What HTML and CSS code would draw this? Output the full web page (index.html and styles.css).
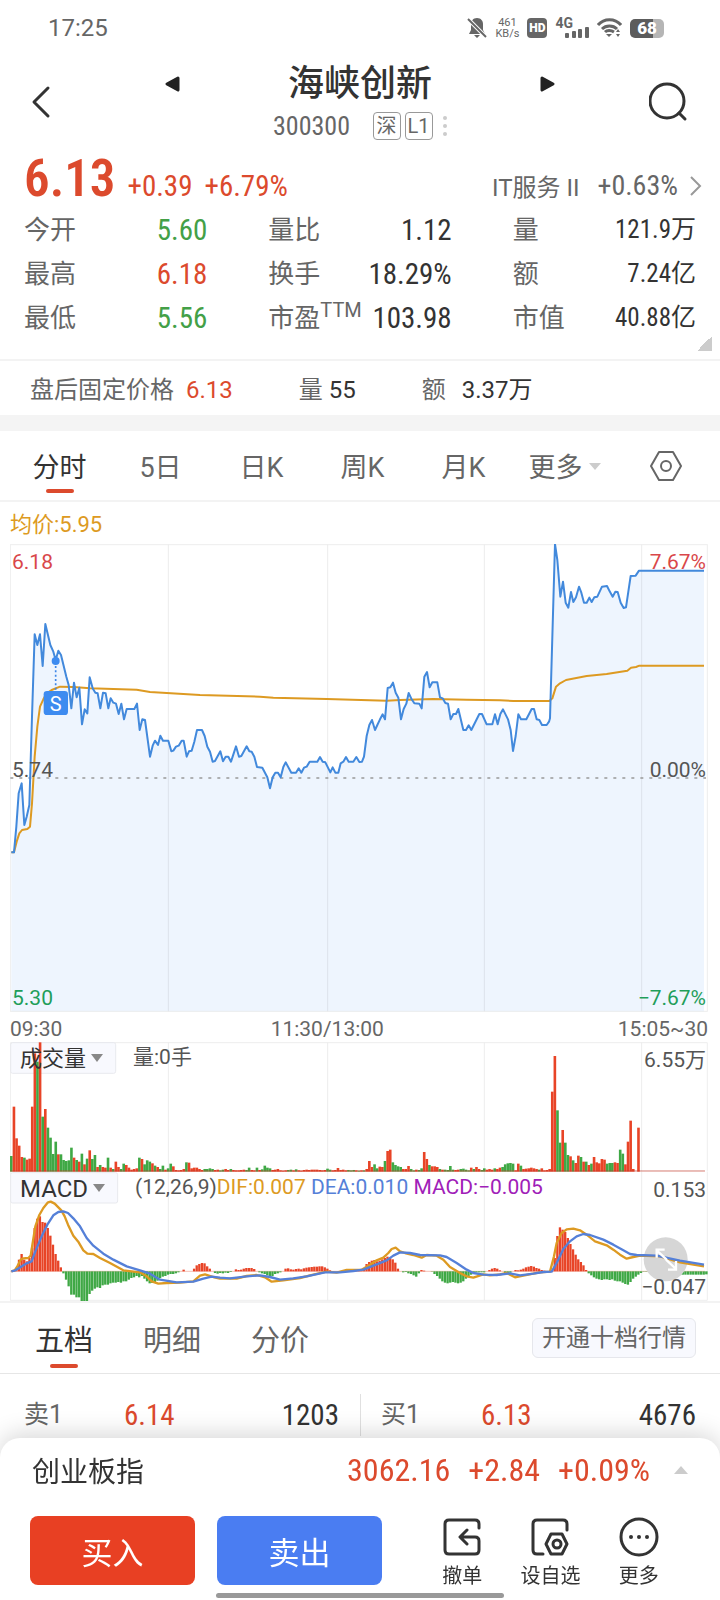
FILE: index.html
```html
<!DOCTYPE html>
<html lang="zh-CN">
<head>
  <meta charset="UTF-8">
  <meta name="viewport" content="width=device-width, initial-scale=1.0">
  <title>海峡创新 300300</title>
  <link rel="stylesheet" href="styles.css">
</head>
<body>
  <div class="status-bar">
    <span class="clock">17:25</span>
    <div class="status-icons">
      <svg width="20" height="22" viewBox="0 0 20 22">
        <path d="M10 1c-4 0-6 3-6 6v6l-2 4h16l-2-4V7c0-3-2-6-6-6z M7 18h6l-3 3z" fill="#666"/>
        <path d="M1 2l18 18" stroke="#fff" stroke-width="4"/>
        <path d="M1 2l18 18" stroke="#666" stroke-width="2"/>
      </svg>
      <span class="net-speed">461<br>KB/s</span>
      <span class="hd">HD</span>
      <span class="signal">
        <span class="signal-type">4G</span>
        <svg width="24" height="12" viewBox="0 0 24 12" fill="#666">
          <rect x="0" y="7" width="4" height="5" rx="1"/>
          <rect x="7" y="5" width="4" height="7" rx="1"/>
          <rect x="13" y="3" width="4" height="9" rx="1"/>
          <rect x="20" y="1" width="4" height="11" rx="1"/>
        </svg>
      </span>
      <svg width="25" height="20" viewBox="0 0 25 20" fill="none" stroke="#666" stroke-width="3">
        <path d="M1 7c6-7 17-7 23 0M5 11c4-4 11-4 15 0M8 14c2-2 6-2 9 0"/>
        <path d="M9 16l3 3 3-3z" fill="#666" stroke="none"/>
        <path d="M19 14l2-3 2 3zM19 16l2 3 2-3z" fill="#666" stroke="none"/>
      </svg>
      <span class="battery">68</span>
    </div>
  </div>

  <header class="header">
    <button class="icon-btn back" aria-label="返回">
      <svg width="20" height="34" viewBox="0 0 20 34" fill="none" stroke="#333" stroke-width="3" stroke-linecap="round" stroke-linejoin="round">
        <path d="M17 3L3 17l14 14"/>
      </svg>
    </button>
    <button class="icon-btn step" aria-label="上一只">
      <svg width="16" height="18" viewBox="0 0 16 18" fill="#222" stroke="#222" stroke-width="3" stroke-linejoin="round">
        <path d="M14 3L3 9l11 6z"/>
      </svg>
    </button>
    <div class="stock">
      <h1>海峡创新</h1>
      <div class="stock-code">
        <span class="num">300300</span>
        <span class="badges"><span class="badge">深</span><span class="badge">L1</span></span>
        <svg width="4" height="20" viewBox="0 0 4 20" fill="#ccc">
          <circle cx="2" cy="2" r="2"/><circle cx="2" cy="10" r="2"/><circle cx="2" cy="18" r="2"/>
        </svg>
      </div>
    </div>
    <button class="icon-btn step" aria-label="下一只">
      <svg width="16" height="18" viewBox="0 0 16 18" fill="#222" stroke="#222" stroke-width="3" stroke-linejoin="round">
        <path d="M2 3l11 6-11 6z"/>
      </svg>
    </button>
    <button class="icon-btn" aria-label="搜索">
      <svg width="40" height="40" viewBox="0 0 40 40" fill="none" stroke="#333" stroke-width="3" stroke-linecap="round">
        <circle cx="18" cy="19" r="17"/>
        <path d="M30 31l6 6"/>
      </svg>
    </button>
  </header>

  <section class="quote">
    <div class="quote-top">
      <span class="price num up">6.13</span>
      <span class="change num up">+0.39</span>
      <span class="change num up">+6.79%</span>
      <a class="sector" href="#">
        <span>IT服务 II</span>
        <span class="change num">+0.63%</span>
        <svg width="12" height="20" viewBox="0 0 12 20" fill="none" stroke="#999" stroke-width="2"><path d="M1 1l9 9-9 9"/></svg>
      </a>
    </div>
    <dl class="stats">
      <div><dt>今开</dt><dd class="num down">5.60</dd></div>
      <div><dt>量比</dt><dd class="num">1.12</dd></div>
      <div><dt>量</dt><dd class="num small">121.9万</dd></div>
      <div><dt>最高</dt><dd class="num up">6.18</dd></div>
      <div><dt>换手</dt><dd class="num">18.29%</dd></div>
      <div><dt>额</dt><dd class="num small">7.24亿</dd></div>
      <div><dt>最低</dt><dd class="num down">5.56</dd></div>
      <div><dt>市盈<sup>TTM</sup></dt><dd class="num">103.98</dd></div>
      <div><dt>市值</dt><dd class="num small">40.88亿</dd></div>
    </dl>
    <span class="corner"></span>
  </section>

  <div class="after-hours">
    <span>盘后固定价格 <b class="up">6.13</b></span>
    <span>量 <b>55</b></span>
    <span>额 <b class="wide">3.37万</b></span>
  </div>

  <nav class="chart-tabs">
    <button class="active">分时</button>
    <button>5日</button>
    <button>日K</button>
    <button>周K</button>
    <button>月K</button>
    <button>更多<i class="caret"></i></button>
    <button aria-label="设置">
      <svg width="32" height="32" viewBox="0 0 32 32" fill="none" stroke="#666" stroke-width="2" stroke-linejoin="round">
        <path d="M9 2h14l8 14-8 14H9L1 16z"/>
        <circle cx="16" cy="16" r="5"/>
      </svg>
    </button>
  </nav>

  <main class="charts">
    <p class="average">均价:5.95</p>

    <div class="panel">
      <svg class="plot" viewBox="30 42 2094 1404">
        <polygon id="price-area" fill="#eef5fe"/>
        <path class="grid" d="M505 42v1404M983 42v1404M1453 42v1404M1925 42v1404"/>
        <rect class="frame" x="31" y="44" width="2091" height="1400"/>
        <path d="M31 744H2118" stroke="#999" stroke-width="5" stroke-dasharray="9 18"/>
        <polyline id="average-line" class="line orange"/>
        <polyline id="price-line" class="line blue"/>
        <path d="M167 395v90" stroke="#3d86e8" stroke-width="5" stroke-dasharray="6 7"/>
        <circle cx="167" cy="393" r="12" fill="#3d8bf0"/>
        <rect x="131" y="483" width="73" height="72" rx="10" fill="#3d8bf0"/>
        <text class="trade-mark" x="167" y="543">S</text>
      </svg>
      <span class="label top-left red">6.18</span>
      <span class="label top-right red">7.67%</span>
      <span class="label mid-left">5.74</span>
      <span class="label mid-right">0.00%</span>
      <span class="label bottom-left green">5.30</span>
      <span class="label bottom-right green">−7.67%</span>
    </div>

    <div class="time-axis">
      <span>09:30</span>
      <span>11:30/13:00</span>
      <span>15:05~30</span>
    </div>

    <div class="panel">
      <svg class="plot" viewBox="30 187 2094 389">
        <path class="grid" d="M505 187v389M983 187v389M1453 187v389M1925 187v389"/>
        <path class="frame" d="M31 576V189H2122V576"/>
        <rect x="32" y="189" width="315" height="92" rx="6" fill="#f8f9fe" stroke="#e8e9ee" stroke-width="3"/>
        <g id="volume-bars"></g>
        <path d="M31 574H2115" stroke="#c0392b" stroke-width="2"/>
      </svg>
      <div class="panel-head">
        <span class="picker"><select aria-label="副图指标一"><option>成交量</option></select></span>
        <span>量:0手</span>
      </div>
      <span class="label panel-right">6.55万</span>
    </div>

    <div class="panel">
      <svg class="plot" viewBox="30 577 2094 387">
        <path class="grid" d="M505 577v387M983 577v387M1453 577v387M1925 577v387"/>
        <path class="frame" d="M31 577V962H2122V577"/>
        <rect x="32" y="579" width="321" height="91" rx="6" fill="#f8f9fe" stroke="#e8e9ee" stroke-width="3"/>
        <path d="M31 875H2115" stroke="#f0a090" stroke-width="2"/>
        <g id="macd-bars"></g>
        <circle cx="1997" cy="839" r="66" fill="#d6d6d6"/>
        <polyline id="dif-line" class="line orange"/>
        <polyline id="dea-line" class="line dea"/>
        <path d="M2000 840L1970 812M1970 834V810H1994M1998 840L2028 868M2028 844V870H2004" fill="none" stroke="#fff" stroke-width="7"/>
      </svg>
      <div class="panel-head">
        <span class="picker macd"><select aria-label="副图指标二"><option>MACD</option></select></span>
        <span>(12,26,9)<span class="dif">DIF:0.007</span> <span class="dea-text">DEA:0.010</span> <span class="macd-text">MACD:−0.005</span></span>
      </div>
      <span class="label panel-right">0.153</span>
      <span class="label bottom-right">−0.047</span>
    </div>
  </main>

  <nav class="depth-tabs">
    <button class="active">五档</button>
    <button>明细</button>
    <button>分价</button>
    <button class="upgrade">开通十档行情</button>
  </nav>

  <div class="depth">
    <div class="depth-row"><span>卖1</span><span class="num up">6.14</span><span class="num amount">1203</span></div>
    <div class="depth-row"><span>买1</span><span class="num up">6.13</span><span class="num amount">4676</span></div>
  </div>

  <footer class="sheet">
    <div class="index-row">
      <span class="index-name">创业板指</span>
      <span class="num up">3062.16</span>
      <span class="num up">+2.84</span>
      <span class="num up">+0.09%</span>
      <i class="caret up-caret"></i>
    </div>
    <div class="actions">
      <button class="buy">买入</button>
      <button class="sell">卖出</button>
      <div class="shortcuts">
        <button>
          <svg width="40" height="40" viewBox="0 0 40 40" fill="none" stroke="#333" stroke-width="3" stroke-linecap="round" stroke-linejoin="round">
            <path d="M37 11V7q0-4-4-4H7Q3 3 3 7v26q0 4 4 4h26q4 0 4-4V24q0-4-4-4H19M25 13l-7 7 7 7"/>
          </svg>
          撤单
        </button>
        <button>
          <svg width="40" height="40" viewBox="0 0 40 40" fill="none" stroke="#333" stroke-width="3" stroke-linecap="round" stroke-linejoin="round">
            <path d="M37 13V7q0-4-4-4H7Q3 3 3 7v26q0 4 4 4h6"/>
            <path d="M21 17h11l5 10-5 10H21l-5-10z"/>
            <circle cx="27" cy="27" r="4"/>
          </svg>
          设自选
        </button>
        <button>
          <svg width="40" height="40" viewBox="0 0 40 40" fill="none" stroke="#333" stroke-width="3">
            <circle cx="20" cy="20" r="18"/>
            <g fill="#333" stroke="none"><circle cx="12" cy="20" r="2"/><circle cx="20" cy="20" r="2"/><circle cx="28" cy="20" r="2"/></g>
          </svg>
          更多
        </button>
      </div>
    </div>
    <div class="home-bar"></div>
  </footer>

  <script src="charts.js"></script>
</body>
</html>
```
FILE: styles.css
```css
* {
  box-sizing: border-box;
}
body {
  margin: 0;
  min-height: 100vh;
  background: #fff;
  color: #333;
  font-family: Roboto, "Noto Sans CJK SC", sans-serif;
  font-size: 24px;
}
button {
  padding: 0;
  border: none;
  background: none;
  color: inherit;
  font: inherit;
  cursor: pointer;
}
svg {
  display: block;
}
.num {
  font-family: "Roboto Condensed", "Liberation Sans Narrow", Roboto, "Noto Sans CJK SC", sans-serif;
}
.up {
  color: #dc4a2d;
}
.down {
  color: #43a047;
}

/* status bar */
.status-bar {
  display: flex;
  justify-content: space-between;
  align-items: center;
  height: 56px;
  padding: 0 56px 0 48px;
  color: #666;
}
.status-icons {
  display: flex;
  align-items: center;
  gap: 8px;
}
.net-speed {
  font-size: 11px;
  line-height: 11px;
  text-align: center;
}
.hd {
  width: 20px;
  border-radius: 4px;
  background: #666;
  color: #fff;
  font-size: 12px;
  font-weight: 900;
  line-height: 20px;
  text-align: center;
}
.signal {
  display: flex;
  align-items: flex-end;
  height: 20px;
}
.signal-type {
  align-self: flex-start;
  margin-right: -8px;
  font-size: 14px;
  font-weight: 700;
  line-height: 10px;
}
.battery {
  width: 34px;
  border-radius: 5px;
  background: linear-gradient(to right, #5c5c5c 68%, #b5b5b5 68%);
  color: #fff;
  font-size: 17px;
  font-weight: 900;
  line-height: 19px;
  text-align: center;
}

/* header */
.header {
  display: flex;
  justify-content: space-between;
  align-items: center;
  height: 92px;
  padding: 0 31px;
}
.icon-btn svg {
  margin: 0 auto;
}
.back {
  width: 40px;
}
.back svg {
  margin: 0;
}
.step {
  padding-bottom: 36px;
}
.stock {
  width: 174px;
  padding-bottom: 4px;
}
.stock h1 {
  margin: 0;
  font-size: 36px;
  font-weight: 500;
  line-height: 52px;
  text-align: center;
}
.stock-code {
  display: flex;
  justify-content: space-between;
  align-items: center;
  height: 32px;
  color: #666;
  font-size: 26px;
  white-space: nowrap;
}
.badges {
  display: flex;
  gap: 4px;
  margin-left: 12px;
}
.badge {
  width: 28px;
  border: 1px solid #999;
  border-radius: 4px;
  font-size: 20px;
  line-height: 26px;
  text-align: center;
}

/* quote */
.quote {
  position: relative;
  height: 211px;
  padding: 3px 24px 0;
}
.quote-top {
  display: flex;
  align-items: baseline;
  height: 57px;
}
.price {
  margin-right: 12px;
  font-size: 51px;
  font-weight: 600;
  line-height: 56px;
}
.change {
  margin-right: 12px;
  font-size: 29px;
}
.sector {
  display: flex;
  align-items: center;
  margin-left: auto;
  margin-right: -6px;
  color: #666;
  text-decoration: none;
}
.sector .change {
  margin-left: 18px;
  font-size: 28px;
}
.stats {
  display: grid;
  grid-template-columns: repeat(3, 1fr);
  column-gap: 61px;
  margin: 0;
}
.stats div {
  display: flex;
  justify-content: space-between;
  height: 44px;
  line-height: 44px;
}
.stats dt {
  color: #666;
  font-size: 26px;
  white-space: nowrap;
}
.stats sup {
  font-size: 20px;
  line-height: 0;
}
.stats dd {
  margin: 0;
  font-size: 29px;
}
.stats .small {
  font-size: 25px;
}
.corner {
  position: absolute;
  right: 8px;
  bottom: 8px;
  width: 15px;
  height: 15px;
  background: linear-gradient(135deg, transparent 50%, #ccc 50%);
}
.after-hours {
  display: flex;
  gap: 66px;
  padding: 0 30px;
  border-top: 2px solid #f3f3f3;
  border-bottom: 16px solid #f4f4f4;
  height: 72px;
  color: #666;
  line-height: 58px;
}
.after-hours b {
  color: #333;
  font-weight: 400;
}
.after-hours .up {
  margin-left: 6px;
  color: #dc4a2d;
}
.after-hours .wide {
  margin-left: 10px;
}

/* chart period tabs */
.chart-tabs {
  display: grid;
  grid-template-columns: repeat(7, 1fr);
  height: 71px;
  padding: 0 4px 0 9px;
  border-bottom: 2px solid #f3f3f3;
  color: #666;
  font-size: 27px;
}
.chart-tabs svg {
  margin: 0 auto;
}
.active {
  position: relative;
  color: #333;
}
.active::after {
  content: "";
  position: absolute;
  left: 50%;
  bottom: 7px;
  width: 28px;
  height: 4px;
  margin-left: -14px;
  border-radius: 2px;
  background: #dc4a2d;
}
.caret {
  display: inline-block;
  margin: 0 0 6px 6px;
  border: 6px solid transparent;
  border-top: 7px solid #ccc;
  border-bottom: none;
  vertical-align: middle;
}
.up-caret {
  margin: 0 0 0 6px;
  border-width: 0 7px 8px;
  border-bottom: 8px solid #ccc;
}

/* charts */
.charts {
  padding: 0 12px 0 10px;
  font-size: 21px;
  color: #555;
}
.average {
  margin: 0;
  height: 42px;
  color: #dd9a22;
  font-size: 22px;
  line-height: 46px;
}
.panel {
  position: relative;
}
.plot {
  width: 100%;
  height: auto;
}
.grid {
  fill: none;
  stroke: #000;
  stroke-opacity: 0.08;
  stroke-width: 3;
}
.frame {
  fill: none;
  stroke: #eee;
  stroke-width: 3;
}
.line {
  fill: none;
  stroke-width: 6;
  stroke-linejoin: round;
}
.orange {
  stroke: #dd9a22;
}
.blue {
  stroke: #4289dc;
}
.dea {
  stroke: #5580d8;
}
#dif-line, #dea-line {
  stroke-width: 7;
}
.trade-mark {
  fill: #fff;
  font-size: 60px;
  text-anchor: middle;
}
.label {
  position: absolute;
  line-height: 24px;
}
.top-left, .mid-left, .bottom-left {
  left: 2px;
}
.top-right, .mid-right, .bottom-right, .panel-right {
  right: 2px;
}
.top-left, .top-right, .panel-right {
  top: 6px;
}
.mid-left, .mid-right {
  bottom: 230px;
}
.bottom-left, .bottom-right {
  bottom: 2px;
}
.red {
  color: #d9474a;
}
.green {
  color: #1f9e5a;
}
.time-axis {
  display: grid;
  grid-template-columns: 5fr 10fr 7fr;
  height: 30px;
  color: #666;
  line-height: 34px;
  text-align: center;
}
.time-axis span:first-child {
  text-align: left;
}
.time-axis span:last-child {
  text-align: right;
}
.panel-head {
  position: absolute;
  left: 0;
  top: 0;
  display: flex;
  gap: 17px;
  line-height: 30px;
}
.picker {
  position: relative;
  width: 106px;
}
.picker.macd {
  width: 108px;
}
.picker select {
  appearance: none;
  width: 100%;
  height: 34px;
  padding: 0 0 0 10px;
  border: none;
  background: none;
  color: #333;
  font: inherit;
  font-size: 22px;
}
.picker.macd select {
  font-size: 24px;
}
.picker::after {
  content: "";
  position: absolute;
  right: 13px;
  top: 12px;
  border: 6px solid transparent;
  border-top: 8px solid #888;
  border-bottom: none;
}
.dif {
  color: #dd9a22;
}
.dea-text {
  color: #5580d8;
}
.macd-text {
  color: #a020b8;
}

/* order book */
.depth-tabs {
  display: flex;
  align-items: stretch;
  gap: 50px;
  height: 73px;
  padding: 0 24px 0 35px;
  border-top: 2px solid #f3f3f3;
  border-bottom: 1px solid #e6e6e6;
  color: #666;
  font-size: 29px;
}
.depth-tabs .active::after {
  bottom: 5px;
}
.depth-tabs .upgrade {
  align-self: center;
  margin-left: auto;
  width: 164px;
  height: 40px;
  border: 1px solid #e6e7ec;
  border-radius: 6px;
  background: #f8f9fe;
  font-size: 24px;
  line-height: 38px;
}
.depth {
  display: grid;
  grid-template-columns: 1fr 1fr;
  padding: 20px 0 160px;
}
.depth-row {
  display: flex;
  padding: 0 21px 0 24px;
  color: #666;
  font-size: 25px;
  line-height: 42px;
}
.depth-row + .depth-row {
  padding: 0 24px 0 20px;
  border-left: 1px solid #e0e0e0;
}
.depth-row span:first-child {
  width: 100px;
}
.depth-row .num {
  font-size: 29px;
}
.depth-row .amount {
  margin-left: auto;
  color: #333;
}

/* bottom sheet */
.sheet {
  position: fixed;
  left: 0;
  right: 0;
  bottom: 0;
  padding-bottom: 2px;
  border-radius: 20px 20px 0 0;
  background: #fff;
  box-shadow: 0 -4px 24px rgba(0, 0, 0, 0.16);
}
.index-row {
  display: flex;
  align-items: center;
  gap: 18px;
  height: 64px;
  padding: 0 32px;
}
.index-row .num {
  font-size: 32px;
}
.index-name {
  margin-right: auto;
  font-size: 28px;
}
.actions {
  display: grid;
  grid-template-columns: 165fr 165fr 279fr;
  gap: 22px;
  padding: 14px 37px 0 30px;
}
.buy, .sell {
  height: 69px;
  border-radius: 8px;
  background: #e84023;
  color: #fff;
  font-size: 31px;
}
.sell {
  background: #4a7df2;
}
.shortcuts {
  display: grid;
  grid-template-columns: repeat(3, 1fr);
  padding-left: 14px;
  font-size: 20px;
  line-height: 34px;
}
.shortcuts svg {
  margin: 1px auto 2px;
}
.home-bar {
  width: 40%;
  height: 5px;
  margin: 0 auto;
  border-radius: 3px;
  background: #999;
}
```
FILE: charts.js
```js
const STEP = 7.84;
const LEFT = 30;
const RED = "#e84427";
const GREEN = "#3fa845";

const price = `34,967 42,967 49,890 56,790 65,760 73,885 80,860 88,825 96,560 104,313 112,345 120,313 128,408 136,282
151,345 160,365 167,390 175,362 183,375 199,440 206,465 214,535 222,458 230,502 238,473 246,583 254,538 262,550 269,442
278,475 286,488 293,490 301,535 309,488 317,490 325,535 332,505 340,518 348,521 356,552 364,521 372,568 380,537 403,537
411,521 419,600 427,568 435,570 450,680 458,647 465,632 474,645 481,617 489,632 505,632 514,664 520,662 528,650 536,647
545,632 551,632 560,680 567,664 575,662 583,635 591,600 606,600 614,618 622,650 630,665 638,695 645,693 661,664 669,694
677,680 685,680 693,695 708,649 717,680 724,678 740,649 748,664 755,665 763,680 771,711 787,713 802,742 810,775 818,742
826,728 834,728 842,742 850,711 857,697 874,728 888,728 896,715 904,728 912,713 920,710 929,695 952,695 960,681 968,695
976,697 991,727 998,712 1006,728 1015,728 1022,700 1030,695 1038,681 1046,695 1060,695 1069,681 1078,696 1086,695
1092,680 1100,618 1108,585 1116,570 1125,600 1132,585 1140,568 1148,553 1155,568 1163,474 1171,472 1179,458 1187,488
1195,503 1203,568 1211,537 1219,521 1226,489 1234,506 1243,520 1258,521 1265,535 1273,440 1281,426 1289,472 1297,457
1312,457 1320,502 1328,505 1336,519 1344,521 1352,568 1360,552 1368,552 1375,537 1390,600 1398,600 1406,586 1414,600
1438,552 1446,552 1460,583 1477,583 1485,553 1493,583 1501,552 1509,538 1524,568 1532,600 1539,663 1547,618 1555,553
1563,568 1579,568 1595,537 1602,537 1610,568 1618,570 1626,585 1640,585 1647,575 1650,565 1665,42 1672,90 1681,200
1689,155 1697,218 1705,233 1713,186 1720,216 1728,202 1737,170 1744,188 1752,218 1760,218 1768,203 1775,216 1783,202
1792,200 1806,170 1821,168 1829,184 1838,200 1846,185 1853,186 1862,218 1871,234 1878,232 1885,185 1892,138 1907,137
1917,122 2112,122`;

const average = `34,967 42,967 50,935 58,910 66,900 82,897 90,890 96,820 104,680 112,590 120,530 130,508 140,490 155,480
180,470 220,471 270,475 410,479 450,486 500,489 600,495 780,500 820,503 980,507 1160,512 1200,510 1300,507 1400,509
1500,511 1540,513 1648,513 1657,505 1668,470 1680,460 1698,450 1760,438 1820,432 1882,422 1893,413 1908,411 1918,407
2112,407`;

const dif = `34,875 44,872 52,860 62,840 70,836 85,835 92,828 98,790 106,740 118,706 130,685 144,668 152,666 164,672
184,692 194,710 204,735 220,768 236,788 250,812 262,822 280,823 300,835 330,850 370,872 420,878 440,890 455,905 475,912
500,910 540,909 580,905 600,888 615,884 640,892 660,897 710,897 740,889 770,886 795,893 815,906 850,902 900,895 940,885
980,876 1010,879 1040,871 1085,870 1110,855 1130,842 1150,834 1165,820 1175,808 1187,804 1200,815 1215,820 1240,826
1265,834 1280,826 1310,828 1330,840 1350,862 1380,880 1400,890 1420,894 1450,884 1470,887 1500,884 1520,880 1545,893
1570,888 1600,882 1620,878 1650,876 1662,830 1670,790 1685,760 1700,749 1720,747 1740,752 1760,765 1785,785 1820,797
1840,810 1860,825 1880,837 1900,832 1920,828 1980,830 2040,848 2112,860`;

const dea = `34,875 46,872 62,862 78,852 95,845 106,815 125,770 142,735 160,707 175,697 190,695 204,700 220,716 240,740
260,775 280,798 310,822 340,840 380,860 420,872 450,882 480,900 530,908 580,906 610,897 635,891 660,894 690,896 740,890
780,887 810,892 840,900 880,896 920,890 975,878 1020,878 1060,874 1090,870 1130,854 1160,842 1180,828 1200,818 1230,820
1260,826 1320,827 1340,832 1370,850 1400,870 1420,880 1450,885 1490,886 1530,881 1560,887 1600,882 1630,877 1655,876
1670,850 1690,808 1710,785 1730,770 1750,763 1770,766 1810,780 1840,795 1870,812 1890,823 1910,826 1970,828 2040,843
2112,855`;

// r = rising minute, g = falling minute, followed by the bar height
const volume = `g47 r195 r100 r78 r44 g42 r36 r39 r195 r355 g330 r388 g165 r188 g132 g102 g53 g90 r52 g52 g35 g32 g34 g72
r42 g35 r30 g54 r22 g39 r64 g38 g50 r14 g20 r14 r12 g42 r12 g8 r30 r14 g8 g24 r20 r12 r6 r8 r10 g42 r38 g22 g34 g30 r25
g18 r14 g8 g18 r6 g10 g24 r16 r5 r4 r5 r8 g28 r27 r10 r12 r12 r8 r5 g8 g8 g10 g8 r5 r6 g4 g6 r8 r5 g8 r5 r4 r4 r5 r6 g5
g12 r5 r4 g12 r5 g7 g18 g12 g10 r5 r6 r8 r4 r3 r4 g5 g6 r4 g7 r4 r3 r5 r6 r5 r6 r6 r6 r5 r4 r5 g9 g6 r4 r5 r11 r5 r6 r4
g5 g4 g5 r4 g3 r4 g4 r8 r32 r14 g22 g10 r15 r14 g32 r62 r66 g28 g20 g16 g14 r8 r8 r17 g8 g4 r6 g5 g10 r59 r38 g20 r16 r16
r14 g8 r6 g6 g5 g17 g6 r5 r6 g8 g9 g6 g4 r12 g8 r14 r8 g5 g10 r6 r8 r6 g10 r8 r12 g14 g22 g25 g26 g24 r4 r24 g18 r8 r9
r10 r12 r10 r8 g6 r10 r4 r5 r8 r240 r347 g184 g87 r125 g87 g50 r46 g34 r26 r48 g44 r30 g30 r20 g24 r44 r28 r25 r38 r36
g24 g26 g26 r28 r26 g66 g54 r22 r90 r153 r8 r0 r132`;

const macd = `0 3 10 35 52 35 30 40 70 130 158 165 148 146 130 107 80 52 32 12 -6 -25 -45 -70 -70 -78 -78 -90 -90 -90
-68 -58 -52 -48 -50 -42 -40 -40 -36 -34 -34 -32 -34 -30 -30 -25 -20 -18 -14 -18 -14 -22 -30 -36 -35 -33 -28 -20 -16 -14
-10 -8 -8 -6 -3 0 5 0 0 0 8 18 22 25 24 15 8 0 -5 -7 -5 -6 -4 -5 -2 0 6 4 5 8 10 10 10 7 0 -3 -6 -8 -12 -15 -14 -8 -6
-3 0 8 9 6 5 7 8 6 9 11 12 13 14 14 15 15 12 8 3 0 0 0 0 0 2 3 3 4 5 4 4 10 22 28 32 34 30 32 36 40 44 42 36 26 8 0 -3
-2 -6 -8 -12 -16 -6 4 2 0 0 -1 -8 -14 -22 -30 -34 -36 -34 -32 -34 -36 -34 -30 -22 -14 -10 -6 -3 -3 -3 -3 0 4 8 10 8 3 0
-5 -6 -4 0 4 3 5 8 12 14 16 14 10 8 4 2 0 0 2 40 106 132 125 118 100 82 66 50 36 28 18 4 -6 -12 -18 -22 -24 -26 -24
-24 -26 -24 -28 -30 -30 -34 -38 -40 -32 -22 -16 -10 -5 -1 -1 -1 -2 -3 -4 -6 -8 -9 -10 -10 -10 -10 -10 -10 -10 -10 -10
-10 -10 -10 -10 -10 -10 -9 -9`;

function bar(i, y, width, height, color) {
  return `<rect x="${LEFT + i * STEP}" y="${y}" width="${width}" height="${height}" fill="${color}"/>`;
}

document.getElementById("price-line").setAttribute("points", price);
document.getElementById("price-area").setAttribute("points", price + " 2112,1446 34,1446");
document.getElementById("average-line").setAttribute("points", average);
document.getElementById("dif-line").setAttribute("points", dif);
document.getElementById("dea-line").setAttribute("points", dea);

document.getElementById("volume-bars").innerHTML = volume.split(/\s+/).map((item, i) => {
  const height = Number(item.slice(1));
  return bar(i, 576 - height, STEP, height, item[0] === "r" ? RED : GREEN);
}).join("");

document.getElementById("macd-bars").innerHTML = macd.split(/\s+/).map((item, i) => {
  const value = Number(item);
  return bar(i, value > 0 ? 875 - value : 875, 7, Math.abs(value), value > 0 ? RED : GREEN);
}).join("");
```
